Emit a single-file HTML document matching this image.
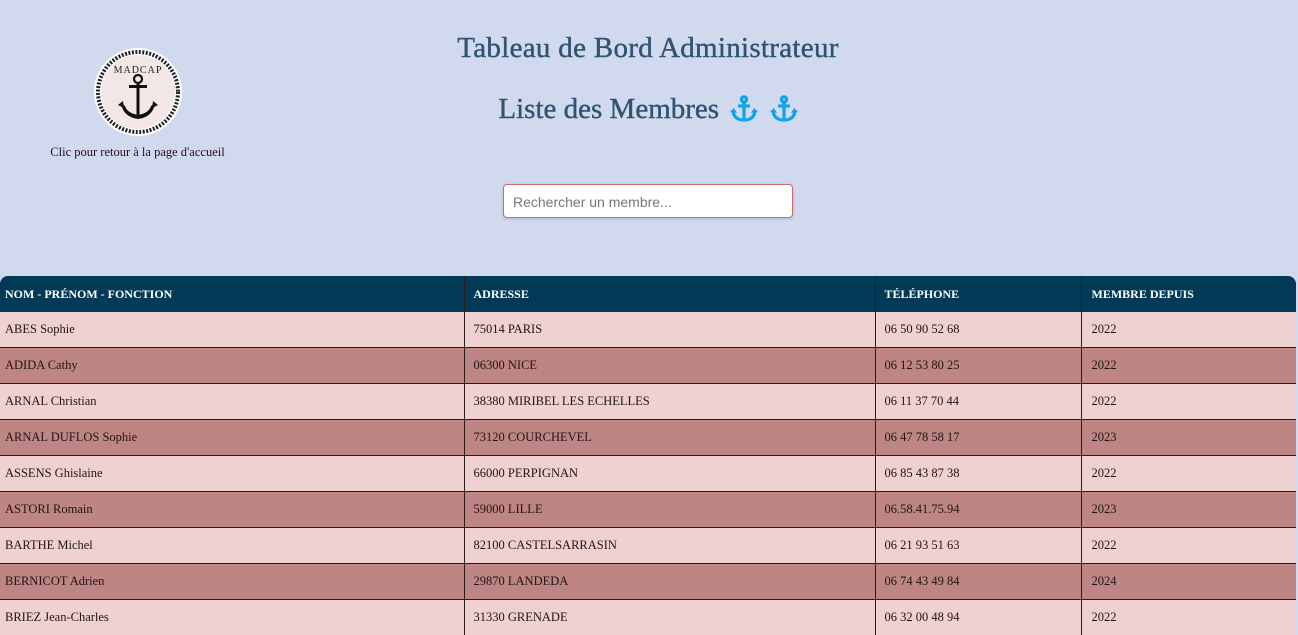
<!DOCTYPE html>
<html><head><meta charset="utf-8"><style>
html,body{margin:0;padding:0;background:#d1d9ee;width:1298px;height:625px;overflow:hidden;font-family:"Liberation Serif",serif}
.logo{position:absolute;left:93px;top:47px;width:90px;height:90px}
.cap{position:absolute;left:0;width:275px;top:145px;text-align:center;font-size:12.5px;color:#2a0a20}
h1{position:absolute;left:0;width:1296px;top:32px;margin:0;text-align:center;font-size:29px;font-weight:normal;color:#2f5470;letter-spacing:0.3px;-webkit-text-stroke:0.4px #2f5470}
h2{position:absolute;left:0;width:1296px;top:93px;margin:0;text-align:center;font-size:29px;font-weight:normal;color:#2f5470;-webkit-text-stroke:0.4px #2f5470;height:34px}
h2 svg{vertical-align:-5px;margin-left:4px}
.search{position:absolute;left:503px;top:184px;width:290px;height:34px;border:1px solid #d06a6a;border-radius:4px;background:#fff;box-shadow:0 1px 3px rgba(0,0,0,.15);box-sizing:border-box;font-family:"Liberation Sans",sans-serif;font-size:14px;color:#777;padding:9px 0 0 9px}
table{position:absolute;left:0;top:276px;width:1296px;border-collapse:collapse;font-size:12.5px;color:#221414}
th{background:#003a57;color:#fff;text-align:left;height:36px;padding:0 0 0 5px;font-size:12px;border-right:1px solid #2a1a1a}
th:first-child{border-top-left-radius:8px}
th:last-child{border-top-right-radius:8px;border-right:none;padding-left:10px}
td{height:35px;padding:0 0 0 5px;border-top:1px solid #2a1a1a;border-right:1px solid #2a1a1a}
td:last-child{border-right:none;padding-left:10px}
tr:nth-child(odd) td{background:#efd1d2}
tr:nth-child(even) td{background:#bd8584}
tbody tr:first-child td{border-top:none}
th:nth-child(2),td:nth-child(2){padding-left:9px}
th:nth-child(3),td:nth-child(3){padding-left:9px}
</style></head><body>
<svg class="logo" viewBox="0 0 90 90">
<circle cx="45" cy="45" r="44" fill="#fff"/>
<circle cx="45" cy="45" r="40" fill="none" stroke="#222" stroke-width="4" stroke-dasharray="2 1.5"/>
<circle cx="45" cy="45" r="37" fill="#f2e6e6"/>
<text x="45" y="26" text-anchor="middle" font-family="Liberation Serif" font-size="10" fill="#222" letter-spacing="1">MADCAP</text>
<circle cx="45" cy="32" r="4" fill="none" stroke="#111" stroke-width="2.2"/>
<rect x="36" y="38" width="18" height="3" fill="#111"/>
<rect x="43.5" y="36" width="3" height="32" fill="#111"/>
<path d="M28 56 Q30 70 45 72 Q60 70 62 56 L58 59 Q56 66 45 68 Q34 66 32 59 Z" fill="#111"/>
<path d="M25 58 L30 54 L31 61Z M65 58 L60 54 L59 61Z" fill="#111"/>
</svg>
<div class="cap">Clic pour retour à la page d'accueil</div>
<h1>Tableau de Bord Administrateur</h1>
<h2>Liste des Membres <svg width="28" height="28" viewBox="0 0 28 28"><g fill="none" stroke="#0ea5e6" stroke-width="3.2"><circle cx="14" cy="4.5" r="2.6"/><line x1="14" y1="7" x2="14" y2="25"/><line x1="8" y1="11" x2="20" y2="11"/><path d="M3 16 Q4 25 14 25 Q24 25 25 16"/></g><path d="M0 17 L4 13 L7 18Z M28 17 L24 13 L21 18Z" fill="#0ea5e6"/></svg> <svg width="28" height="28" viewBox="0 0 28 28"><g fill="none" stroke="#0ea5e6" stroke-width="3.2"><circle cx="14" cy="4.5" r="2.6"/><line x1="14" y1="7" x2="14" y2="25"/><line x1="8" y1="11" x2="20" y2="11"/><path d="M3 16 Q4 25 14 25 Q24 25 25 16"/></g><path d="M0 17 L4 13 L7 18Z M28 17 L24 13 L21 18Z" fill="#0ea5e6"/></svg></h2>
<div class="search">Rechercher un membre...</div>
<table>
<colgroup><col style="width:464px"><col style="width:411px"><col style="width:206px"><col></colgroup>
<thead><tr><th>NOM - PRÉNOM - FONCTION</th><th>ADRESSE</th><th>TÉLÉPHONE</th><th>MEMBRE DEPUIS</th></tr></thead>
<tbody>
<tr><td>ABES Sophie</td><td>75014 PARIS</td><td>06 50 90 52 68</td><td>2022</td></tr>
<tr><td>ADIDA Cathy</td><td>06300 NICE</td><td>06 12 53 80 25</td><td>2022</td></tr>
<tr><td>ARNAL Christian</td><td>38380 MIRIBEL LES ECHELLES</td><td>06 11 37 70 44</td><td>2022</td></tr>
<tr><td>ARNAL DUFLOS Sophie</td><td>73120 COURCHEVEL</td><td>06 47 78 58 17</td><td>2023</td></tr>
<tr><td>ASSENS Ghislaine</td><td>66000 PERPIGNAN</td><td>06 85 43 87 38</td><td>2022</td></tr>
<tr><td>ASTORI Romain</td><td>59000 LILLE</td><td>06.58.41.75.94</td><td>2023</td></tr>
<tr><td>BARTHE Michel</td><td>82100 CASTELSARRASIN</td><td>06 21 93 51 63</td><td>2022</td></tr>
<tr><td>BERNICOT Adrien</td><td>29870 LANDEDA</td><td>06 74 43 49 84</td><td>2024</td></tr>
<tr><td>BRIEZ Jean-Charles</td><td>31330 GRENADE</td><td>06 32 00 48 94</td><td>2022</td></tr>
</tbody></table>
</body></html>
